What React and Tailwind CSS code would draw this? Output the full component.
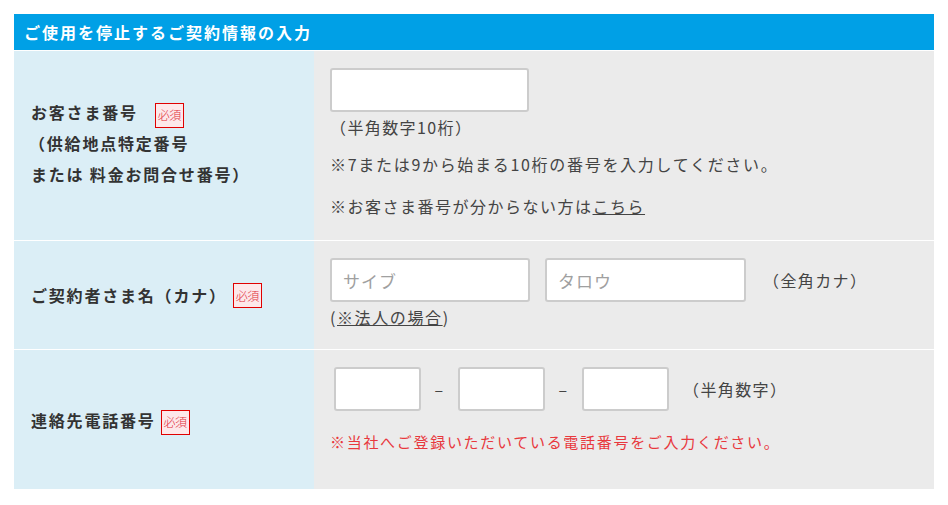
const font = { fontFamily: '"Noto Sans CJK JP", "Noto Sans", sans-serif' };

function Required({ className = '' }) {
  return (
    <span
      className={`inline-flex h-[25px] w-[29px] items-center justify-center border border-[#e00000] bg-[#fde8ea] text-[12px] font-light leading-none tracking-[-0.5px] text-[#e0303a] ${className}`}
    >
      必須
    </span>
  );
}

function Box({ className = '', placeholder }) {
  return (
    <input
      type="text"
      placeholder={placeholder}
      className={`h-[44px] rounded-[3px] border-2 border-[#cccccc] bg-white px-[11px] text-[17px] tracking-[1px] text-[#333] outline-none placeholder:text-[#a0a0a0] ${className}`}
    />
  );
}

export default function App() {
  return (
    <div className="min-h-[505px] bg-white pt-[14px] pl-[14px] text-[#333]" style={font}>
      <div className="w-[920px]">
        {/* Title */}
        <div className="flex h-[36px] items-center bg-[#00a0e6] pl-[10px] text-[16px] font-bold tracking-[2px] text-white">
          ご使用を停止するご契約情報の入力
        </div>

        {/* Row 1 */}
        <div className="flex border-t border-white">
          <div className="flex h-[189px] w-[300px] items-center bg-[#dbeef6] pl-[17px] text-[16px] font-bold leading-[31px] tracking-[1.8px]">
            <div className="-mt-[5px]">
              <div className="flex items-center">
                お客さま番号
                <Required className="mt-[6px] ml-[17px]" />
              </div>
              <div className="-ml-[2px]">（供給地点特定番号</div>
              <div>または 料金お問合せ番号）</div>
            </div>
          </div>
          <div className="flex-1 bg-[#ebebeb] pt-[17px] pl-[16px] text-[16px] tracking-[1.7px] text-[#444]">
            <Box className="w-[199px]" />
            <div className="mt-[3px] leading-[24px] tracking-[1.4px]">（半角数字10桁）</div>
            <div className="mt-[13px] leading-[24px]">
              ※7または9から始まる10桁の番号を入力してください。
            </div>
            <div className="mt-[18px] leading-[24px] tracking-[1.5px]">
              ※お客さま番号が分からない方は<a href="#" className="underline">こちら</a>
            </div>
          </div>
        </div>

        {/* Row 2 */}
        <div className="flex border-t border-white">
          <div className="flex h-[108px] w-[300px] items-center bg-[#dbeef6] pl-[17px] text-[16px] font-bold tracking-[1.8px]">
            ご契約者さま名（カナ）
            <Required className="mt-[1px] ml-[6px]" />
          </div>
          <div className="flex-1 bg-[#ebebeb] pt-[17px] pl-[16px] text-[16px] tracking-[1.4px] text-[#444]">
            <div className="flex items-center">
              <Box className="w-[200px]" placeholder="サイブ" />
              <Box className="ml-[15px] w-[201px]" placeholder="タロウ" />
              <span className="ml-[17px]">（全角カナ）</span>
            </div>
            <div className="mt-[2px] leading-[26px] tracking-[1.6px]">
              (<a href="#" className="underline">※法人の場合</a>)
            </div>
          </div>
        </div>

        {/* Row 3 */}
        <div className="flex border-t border-white">
          <div className="flex h-[139px] w-[300px] items-center bg-[#dbeef6] pl-[17px] text-[16px] font-bold tracking-[1.8px]">
            連絡先電話番号
            <Required className="mt-[5px] ml-[5px]" />
          </div>
          <div className="flex-1 bg-[#ebebeb] pt-[17px] pl-[20px] text-[16px] tracking-[1.4px] text-[#444]">
            <div className="flex items-center">
              <Box className="w-[87px]" />
              <span className="w-[37px] text-center">–</span>
              <Box className="w-[87px]" />
              <span className="w-[37px] text-center">–</span>
              <Box className="w-[87px]" />
              <span className="ml-[14px]">（半角数字）</span>
            </div>
            <div className="-ml-[4px] mt-[19px] text-[15px] leading-[24px] tracking-[1.7px] text-[#e8383d]">
              ※当社へご登録いただいている電話番号をご入力ください。
            </div>
          </div>
        </div>
      </div>
    </div>
  );
}
